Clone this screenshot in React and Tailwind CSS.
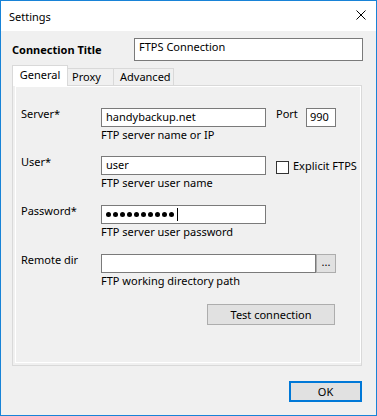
export default function App() {
  const font = "font-['Noto_Sans','Liberation_Sans',sans-serif]";
  return (
    <div className={`w-[377px] h-[416px] border border-[#1883d7] bg-[#f0f0f0] flex flex-col text-[11px] leading-[15px] text-black ${font}`}>
      {/* Title bar */}
      <div className="h-[30px] bg-white flex items-center justify-between pl-[8px] pr-[10px] shrink-0">
        <span>Settings</span>
        <svg width="10" height="10" viewBox="0 0 10 10" className="mb-[2px]">
          <path d="M0.5 0.5 L9.5 9.5 M9.5 0.5 L0.5 9.5" stroke="#000" strokeWidth="1" fill="none" />
        </svg>
      </div>

      {/* Connection title */}
      <div className="flex items-center pl-[11px] mt-[7px] h-[23px]">
        <span className="w-[122px] font-bold">Connection Title</span>
        <div className="w-[229px] h-[23px] border border-[#7a7a7a] bg-white pl-[4px]">FTPS Connection</div>
      </div>

      {/* Tabs */}
      <div className="flex items-end ml-[11px] mt-[4px] h-[20px]">
        <div className="relative z-10 -mb-px w-[56px] h-[21px] bg-white border border-b-0 border-[#d9d9d9] flex justify-center pt-[1px]">
          General
        </div>
        <div className="w-[45px] h-[17px] border-t border-[#d9d9d9] pl-[4px]">Proxy</div>
        <div className="w-[61px] h-[17px] border border-b-0 border-[#d9d9d9] pl-[6px]">Advanced</div>
      </div>

      {/* Panel */}
      <div className="ml-[11px] w-[350px] h-[281px] border border-[#d9d9d9] flex flex-col">
        <div className="flex-1 ml-[2px] mb-[2px] border border-white flex flex-col pl-[5px] pt-[21px]">
          {/* Server */}
          <div className="flex items-start">
            <span className="w-[80px] -mt-[2px]">Server*</span>
            <div className="flex flex-col">
              <div className="w-[165px] h-[19px] border border-[#7a7a7a] bg-white pl-[4px]">handybackup.net</div>
              <span>FTP server name or IP</span>
            </div>
            <span className="ml-[10px] w-[30px] -mt-[2px]">Port</span>
            <div className="w-[30px] h-[19px] border border-[#7a7a7a] bg-white pl-[3px]">990</div>
          </div>

          {/* User */}
          <div className="flex items-start mt-[14px]">
            <span className="w-[80px] -mt-[2px]">User*</span>
            <div className="flex flex-col">
              <div className="w-[165px] h-[19px] border border-[#7a7a7a] bg-white pl-[4px]">user</div>
              <span>FTP server user name</span>
            </div>
            <div className="ml-[10px] mt-[5px] w-[13px] h-[13px] border border-[#333333] bg-white" />
            <span className="ml-[4px] mt-[2px]">Explicit FTPS</span>
          </div>

          {/* Password */}
          <div className="flex items-start mt-[15px]">
            <span className="w-[80px] -mt-[2px]">Password*</span>
            <div className="flex flex-col">
              <div className="w-[165px] h-[19px] border border-[#7a7a7a] bg-white pl-[4px] flex items-center">
                <div className="flex items-center gap-[2px]">
                  {[0, 1, 2, 3, 4, 5, 6, 7, 8, 9].map((i) => (
                    <div key={i} className="w-[5px] h-[5px] rounded-full bg-black" />
                  ))}
                </div>
                <div className="ml-[3px] w-px h-[13px] bg-black" />
              </div>
              <span>FTP server user password</span>
            </div>
          </div>

          {/* Remote dir */}
          <div className="flex items-start mt-[15px]">
            <span className="w-[80px] -mt-[2px]">Remote dir</span>
            <div className="flex flex-col">
              <div className="flex">
                <div className="w-[215px] h-[19px] border border-[#7a7a7a] bg-white" />
                <div className="w-[20px] h-[19px] border border-[#adadad] bg-[#e1e1e1] flex items-center justify-center pb-[4px]">...</div>
              </div>
              <span>FTP working directory path</span>
            </div>
          </div>

          {/* Test connection */}
          <div className="flex mt-[16px] pl-[186px]">
            <div className="w-[128px] h-[21px] border border-[#adadad] bg-[#e1e1e1] flex items-center justify-center">
              Test connection
            </div>
          </div>
        </div>
      </div>

      {/* OK */}
      <div className="flex justify-end pr-[14px] mt-[15px]">
        <div className="w-[73px] h-[21px] border-2 border-[#0078d7] bg-[#e1e1e1] flex items-center justify-center">OK</div>
      </div>
    </div>
  );
}
